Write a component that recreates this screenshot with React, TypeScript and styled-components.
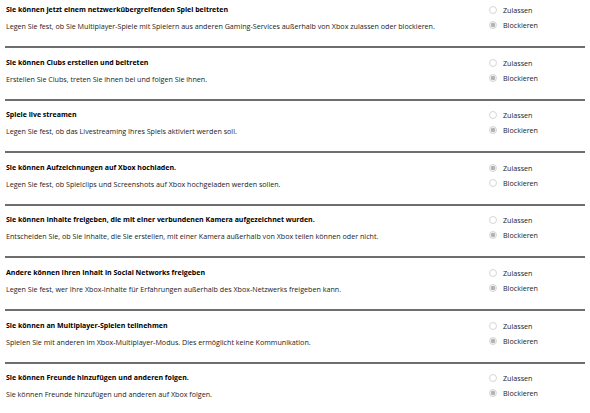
import React from "react";
import styled, { createGlobalStyle } from "styled-components";

const GlobalStyle = createGlobalStyle`
  html, body {
    margin: 0;
    padding: 0;
    background: #ffffff;
  }
  body {
    font-family: "Open Sans", "Noto Sans", "Liberation Sans", sans-serif;
    color: #1a1a1a;
  }
`;

const List = styled.div`
  display: flex;
  flex-direction: column;
  padding: 0 5px;
`;

const Setting = styled.section`
  display: grid;
  grid-template-columns: 1fr 96px;
  align-items: start;
  padding: 9.6px 0 15px;
  border-top: 2px solid #6e6e6e;

  &:first-child {
    border-top: none;
    padding-top: 5px;
  }
`;

const Text = styled.div`
  display: flex;
  flex-direction: column;
  gap: 6px;
  padding-left: 1px;
`;

const Title = styled.h3`
  margin: 0;
  font-size: 7px;
  line-height: 10px;
  font-weight: 700;
  color: #000;
`;

const Description = styled.p`
  margin: 0;
  font-size: 7.15px;
  line-height: 10px;
  color: #222;
`;

const Options = styled.div`
  display: flex;
  flex-direction: column;
  gap: 5px;
`;

const Option = styled.label`
  display: flex;
  align-items: center;
  gap: 6px;
  height: 10px;
  font-size: 7.15px;
  color: #222;
`;

const Dot = styled.span<{ $on: boolean }>`
  box-sizing: border-box;
  width: 8px;
  height: 8px;
  border-radius: 50%;
  border: 1px solid #d6d6d6;
  background: ${(p) =>
    p.$on ? "radial-gradient(circle, #b3b3b3 0 2px, #f2f2f2 2.4px)" : "#fff"};
`;

type Item = { title: string; text: string; allow: boolean };

const items: Item[] = [
  {
    title: "Sie können jetzt einem netzwerkübergreifenden Spiel beitreten",
    text: "Legen Sie fest, ob Sie Multiplayer-Spiele mit Spielern aus anderen Gaming-Services außerhalb von Xbox zulassen oder blockieren.",
    allow: false,
  },
  {
    title: "Sie können Clubs erstellen und beitreten",
    text: "Erstellen Sie Clubs, treten Sie ihnen bei und folgen Sie ihnen.",
    allow: false,
  },
  {
    title: "Spiele live streamen",
    text: "Legen Sie fest, ob das Livestreaming Ihres Spiels aktiviert werden soll.",
    allow: false,
  },
  {
    title: "Sie können Aufzeichnungen auf Xbox hochladen.",
    text: "Legen Sie fest, ob Spielclips und Screenshots auf Xbox hochgeladen werden sollen.",
    allow: true,
  },
  {
    title: "Sie können Inhalte freigeben, die mit einer verbundenen Kamera aufgezeichnet wurden.",
    text: "Entscheiden Sie, ob Sie Inhalte, die Sie erstellen, mit einer Kamera außerhalb von Xbox teilen können oder nicht.",
    allow: false,
  },
  {
    title: "Andere können Ihren Inhalt in Social Networks freigeben",
    text: "Legen Sie fest, wer Ihre Xbox-Inhalte für Erfahrungen außerhalb des Xbox-Netzwerks freigeben kann.",
    allow: false,
  },
  {
    title: "Sie können an Multiplayer-Spielen teilnehmen",
    text: "Spielen Sie mit anderen im Xbox-Multiplayer-Modus. Dies ermöglicht keine Kommunikation.",
    allow: false,
  },
  {
    title: "Sie können Freunde hinzufügen und anderen folgen.",
    text: "Sie können Freunde hinzufügen und anderen auf Xbox folgen.",
    allow: false,
  },
];

export default function App() {
  return (
    <>
      <GlobalStyle />
      <List>
        {items.map((item) => (
          <Setting key={item.title}>
            <Text>
              <Title>{item.title}</Title>
              <Description>{item.text}</Description>
            </Text>
            <Options>
              <Option>
                <Dot $on={item.allow} />
                Zulassen
              </Option>
              <Option>
                <Dot $on={!item.allow} />
                Blockieren
              </Option>
            </Options>
          </Setting>
        ))}
      </List>
    </>
  );
}
